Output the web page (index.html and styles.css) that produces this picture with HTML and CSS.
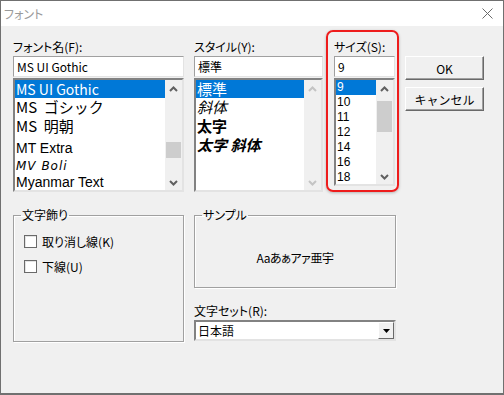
FILE: index.html
```html
<!DOCTYPE html>
<html lang="ja">
<head>
    <meta charset="UTF-8">
    <title>フォント</title>
    <link rel="stylesheet" href="styles.css">
</head>
<body>
    <div class="window">
        <div class="titlebar">
            <span class="title">フォント</span>
            <svg class="close" width="11" height="11" viewBox="0 0 11 11">
                <path d="M0.5 0.5 L10.5 10.5 M10.5 0.5 L0.5 10.5" stroke="#6a6a6a" stroke-width="1" fill="none"/>
            </svg>
        </div>

        <div class="content">
            <div class="top-row">
                <div class="col col-font">
                    <label class="caption">フォント名(F):</label>
                    <div class="textbox">MS UI Gothic</div>
                    <div class="listbox list-font">
                        <ul class="items">
                            <li class="item f-uigothic selected">MS UI Gothic</li>
                            <li class="item f-gothic">MS&nbsp; ゴシック</li>
                            <li class="item f-mincho">MS&nbsp; 明朝</li>
                            <li class="item f-extra">MT Extra</li>
                            <li class="item f-boli">MV Boli</li>
                            <li class="item f-myanmar">Myanmar Text</li>
                        </ul>
                        <div class="scrollbar">
                            <div class="sb-btn">
                                <svg width="9" height="6" viewBox="0 0 9 6"><polyline points="1,5 4.5,1.5 8,5" fill="none" stroke="#606060" stroke-width="2"/></svg>
                            </div>
                            <div class="sb-track"><div class="sb-thumb"></div></div>
                            <div class="sb-btn down">
                                <svg width="9" height="6" viewBox="0 0 9 6"><polyline points="1,1 4.5,4.5 8,1" fill="none" stroke="#606060" stroke-width="2"/></svg>
                            </div>
                        </div>
                    </div>
                </div>

                <div class="col col-style">
                    <label class="caption">スタイル(Y):</label>
                    <div class="textbox">標準</div>
                    <div class="listbox list-style">
                        <ul class="items">
                            <li class="item s-row selected">標準</li>
                            <li class="item s-row s-italic">斜体</li>
                            <li class="item s-row s-bold">太字</li>
                            <li class="item s-row s-bold s-italic">太字 斜体</li>
                        </ul>
                        <div class="scrollbar disabled">
                            <div class="sb-btn">
                                <svg width="9" height="6" viewBox="0 0 9 6"><polyline points="1,5 4.5,1.5 8,5" fill="none" stroke="#c4c4c4" stroke-width="2"/></svg>
                            </div>
                            <div class="sb-track"></div>
                            <div class="sb-btn down">
                                <svg width="9" height="6" viewBox="0 0 9 6"><polyline points="1,1 4.5,4.5 8,1" fill="none" stroke="#c4c4c4" stroke-width="2"/></svg>
                            </div>
                        </div>
                    </div>
                </div>

                <div class="size-frame">
                    <label class="caption">サイズ(S):</label>
                    <div class="textbox">9</div>
                    <div class="listbox list-size">
                        <ul class="items">
                            <li class="item z-row selected">9</li>
                            <li class="item z-row">10</li>
                            <li class="item z-row">11</li>
                            <li class="item z-row">12</li>
                            <li class="item z-row">14</li>
                            <li class="item z-row">16</li>
                            <li class="item z-row">18</li>
                        </ul>
                        <div class="scrollbar">
                            <div class="sb-btn">
                                <svg width="9" height="6" viewBox="0 0 9 6"><polyline points="1,5 4.5,1.5 8,5" fill="none" stroke="#606060" stroke-width="2"/></svg>
                            </div>
                            <div class="sb-track"><div class="sb-thumb"></div></div>
                            <div class="sb-btn down">
                                <svg width="9" height="6" viewBox="0 0 9 6"><polyline points="1,1 4.5,4.5 8,1" fill="none" stroke="#606060" stroke-width="2"/></svg>
                            </div>
                        </div>
                    </div>
                </div>

                <div class="buttons">
                    <button class="btn">OK</button>
                    <button class="btn">キャンセル</button>
                </div>
            </div>

            <div class="bottom-row">
                <fieldset class="group group-effects">
                    <legend>文字飾り</legend>
                    <div class="check-row first">
                        <span class="checkbox"></span>
                        <span>取り消し線(K)</span>
                    </div>
                    <div class="check-row">
                        <span class="checkbox"></span>
                        <span>下線(U)</span>
                    </div>
                </fieldset>

                <div class="col col-sample">
                    <fieldset class="group group-sample">
                        <legend>サンプル</legend>
                        <div class="sample-text">Aaあぁアァ亜宇</div>
                    </fieldset>
                    <label class="caption charset-caption">文字セット(R):</label>
                    <div class="combo">
                        <span class="combo-value">日本語</span>
                        <span class="combo-btn">
                            <svg width="7" height="4" viewBox="0 0 7 4"><polygon points="0,0 7,0 3.5,4" fill="#000"/></svg>
                        </span>
                    </div>
                </div>
            </div>
        </div>
    </div>
</body>
</html>
```

FILE: styles.css
```css
* {
    margin: 0;
    padding: 0;
    box-sizing: border-box;
}

body {
    font-family: "Noto Sans CJK JP", "Liberation Sans", sans-serif;
    font-feature-settings: "palt";
    font-size: 12px;
    color: #000;
    background: #f0f0f0;
}

.window {
    width: 504px;
    height: 395px;
    border: 1px solid #707070;
    border-bottom-width: 2px;
    background: #f0f0f0;
}

.titlebar {
    height: 25px;
    background: #fff;
    display: flex;
    align-items: center;
    justify-content: space-between;
    padding: 0 10px 0 3px;
}

.title {
    color: #9a9a9a;
    line-height: 14px;
}

.content {
    padding: 4px 0 0 12px;
}

/* ---------- top row ---------- */

.top-row {
    display: flex;
    align-items: flex-start;
}

.col-font {
    width: 171px;
    padding-top: 10px;
}

.col-style {
    width: 129px;
    margin-left: 10px;
    padding-top: 10px;
}

.caption {
    display: block;
    height: 14px;
    line-height: 14px;
    margin-bottom: 2px;
    white-space: nowrap;
}

.textbox {
    height: 21px;
    background: #fff;
    border: 1px solid;
    border-color: #a0a0a0 #e3e3e3 #e3e3e3 #a0a0a0;
    line-height: 19px;
    padding-left: 3px;
    margin-bottom: 1px;
}

.listbox {
    display: flex;
    background: #fff;
    border: 2px solid;
    border-color: #828282 #e3e3e3 #e3e3e3 #828282;
}

.list-font,
.list-style {
    height: 114px;
}

.items {
    list-style: none;
    flex: 1;
    overflow: hidden;
}

.item {
    white-space: nowrap;
    padding-left: 1px;
}

.item.selected {
    background: #0078d7;
    color: #fff;
}

/* font list rows, each in its own face */
.f-uigothic {
    height: 18px;
    line-height: 18px;
    font-size: 14px;
}

.f-gothic {
    height: 18px;
    line-height: 18px;
    font-size: 15px;
    font-feature-settings: normal;
}

.f-mincho {
    height: 20px;
    line-height: 20px;
    font-size: 15px;
    font-feature-settings: normal;
}

.f-extra {
    height: 22px;
    line-height: 24px;
    font-family: "Liberation Sans", sans-serif;
    font-size: 14px;
}

.f-boli {
    height: 16px;
    line-height: 16px;
    font-family: "DejaVu Sans", sans-serif;
    font-style: italic;
    font-size: 12px;
    letter-spacing: 1px;
}

.f-myanmar {
    height: 16px;
    line-height: 16px;
    font-family: "Liberation Sans", sans-serif;
    font-size: 14px;
}

/* style list rows */
.s-row {
    height: 18px;
    line-height: 18px;
    font-size: 15px;
    font-feature-settings: normal;
}

.s-row + .s-row {
    height: 19px;
}

.s-italic {
    font-style: italic;
}

.s-bold {
    font-weight: bold;
}

/* size list rows */
.z-row {
    height: 15px;
    line-height: 15px;
    font-family: "Liberation Sans", sans-serif;
    font-size: 12px;
    padding-left: 1px;
}

/* scrollbars */
.scrollbar {
    width: 17px;
    background: #f0f0f0;
    display: flex;
    flex-direction: column;
}

.sb-btn {
    height: 17px;
    display: flex;
    align-items: center;
    justify-content: center;
}

.sb-btn.down {
    align-items: flex-end;
    padding-bottom: 4px;
}

.sb-btn svg {
    display: block;
}

.sb-track {
    flex: 1;
}

.sb-thumb {
    background: #cdcdcd;
    margin: 0 1px;
}

.list-font .sb-thumb {
    margin-top: 45px;
    height: 16px;
}

.list-size .sb-thumb {
    margin-top: 4px;
    height: 31px;
}

/* size column with red highlight */
.size-frame {
    width: 73px;
    height: 162px;
    margin-left: 3px;
    padding: 8px 2px 0 6px;
    border: 2px solid #ee1c1c;
    border-radius: 7px;
    box-shadow: 0 1px 3px rgba(0, 0, 0, 0.25);
}

.list-size {
    height: 108px;
}

.buttons {
    margin-left: 6px;
    margin-top: 26px;
    width: 79px;
    display: flex;
    flex-direction: column;
    gap: 7px;
}

.btn {
    height: 24px;
    font-family: inherit;
    font-size: 12px;
    color: #000;
    background: #f0f0f0;
    border: 1px solid;
    border-color: #fff #696969 #696969 #fff;
    box-shadow: inset -1px -1px 0 #a0a0a0;
}

/* ---------- bottom row ---------- */

.bottom-row {
    display: flex;
    align-items: flex-start;
    margin-top: 16px;
}

.group {
    border: 1px solid #a0a0a0;
    box-shadow: inset 1px 1px 0 #fff, 1px 1px 0 #fff;
    padding: 0 10px;
    margin: 0;
    min-width: 0;
}

.group legend {
    padding: 0 1px;
    margin-left: -3px;
    line-height: 14px;
    height: 14px;
}

.group-effects {
    width: 171px;
    height: 134px;
}

.check-row {
    display: flex;
    align-items: center;
    gap: 5px;
    height: 13px;
    margin-top: 12px;
    line-height: 13px;
}

.check-row.first {
    margin-top: 13px;
}

.checkbox {
    width: 13px;
    height: 13px;
    background: #fff;
    border: 1px solid #6a6a6a;
    box-shadow: inset 1px 1px 0 #e3e3e3;
}

.col-sample {
    width: 202px;
    margin-left: 10px;
}

.group-sample {
    height: 80px;
}

.sample-text {
    height: 65px;
    padding-top: 5px;
    display: flex;
    align-items: center;
    justify-content: center;
    font-size: 12px;
    letter-spacing: -0.5px;
}

.charset-caption {
    margin-top: 16px;
}

.combo {
    height: 21px;
    display: flex;
    align-items: center;
    justify-content: space-between;
    background: #fff;
    border: 2px solid;
    border-color: #828282 #e3e3e3 #e3e3e3 #828282;
    padding-left: 2px;
}

.combo-value {
    line-height: 17px;
}

.combo-btn {
    width: 16px;
    height: 17px;
    display: flex;
    align-items: center;
    justify-content: center;
    background: #f0f0f0;
    border: 1px solid;
    border-color: #fff #696969 #696969 #fff;
}
```
